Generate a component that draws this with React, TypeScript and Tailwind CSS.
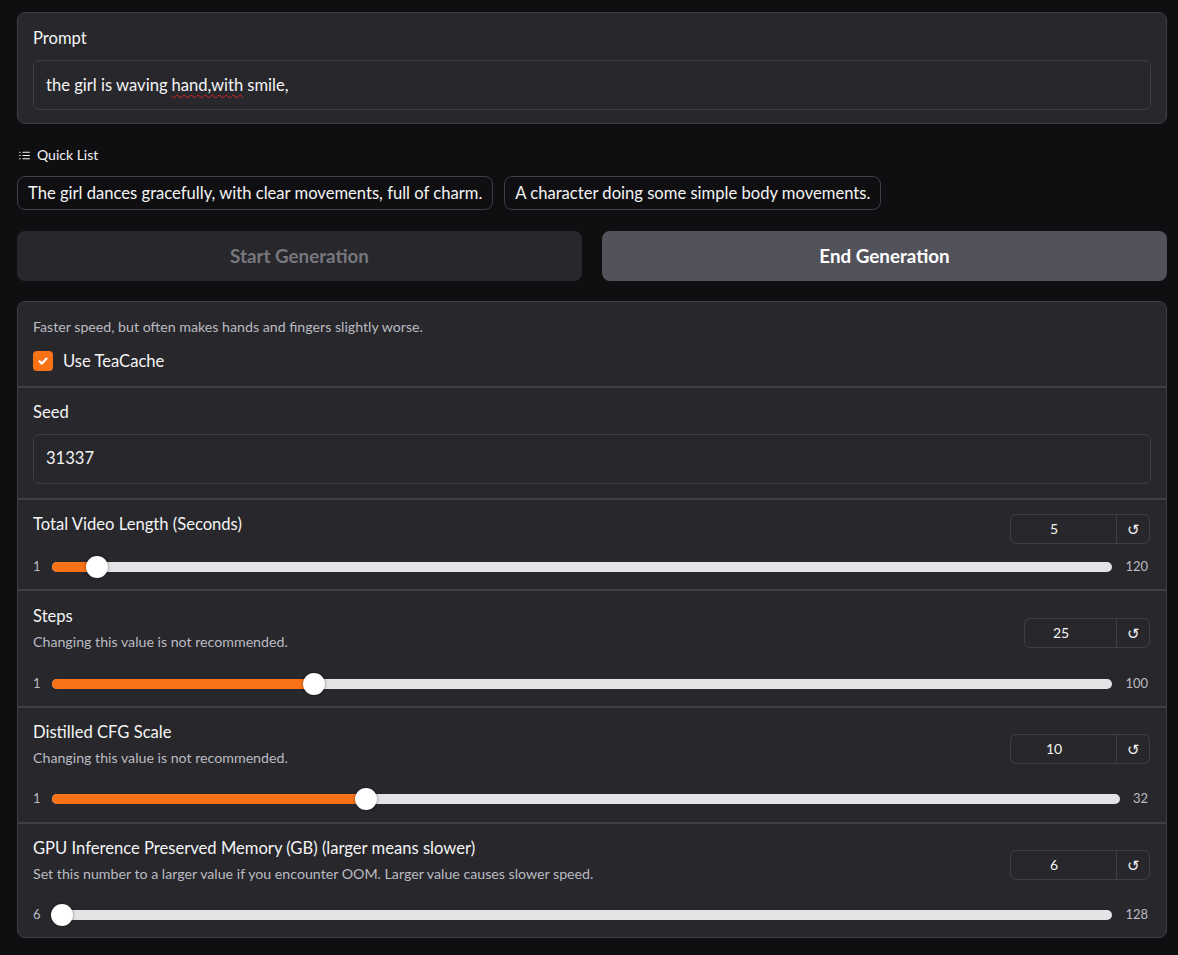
import React from "react";

const FONT = "font-['Lato','Noto_Sans',sans-serif]";

function ListIcon() {
  return (
    <svg width="13" height="13" viewBox="0 0 24 24" fill="none" stroke="currentColor" strokeWidth="2" strokeLinecap="round">
      <path d="M9 6h12M9 12h12M9 18h12" />
      <path d="M3 6h1M3 12h1M3 18h1" />
    </svg>
  );
}

type SliderProps = {
  label: string;
  info?: string;
  value: number;
  min: number;
  max: number;
  boxWidth: string;
  pad: string;
  infoGap?: string;
};

function SliderBlock({ label, info, value, min, max, boxWidth, pad, infoGap = "mb-[9px]" }: SliderProps) {
  const frac = (value - min) / (max - min);
  const pos = `calc(10px + ${frac} * (100% - 20px))`;
  return (
    <div className={`pl-[15px] pr-[16px] ${pad}`}>
      <div className="flex items-start justify-between">
        <div>
          <div className="text-[16.6px] leading-[20px] text-[#f4f4f5]">{label}</div>
          {info && (
            <div className={`mt-[6px] ${infoGap} text-[14.2px] leading-[20px] text-[#bbbbc2]`}>{info}</div>
          )}
        </div>
        <div
          className={`${boxWidth} ${info ? "mt-[12px]" : "mt-0"} flex h-[30px] rounded-[6px] border border-[#3f3f46]`}
        >
          <div className="flex flex-1 items-center justify-center pr-[19px] text-[14px] text-[#f4f4f5]">{value}</div>
          <div className="flex w-[33px] items-center justify-center border-l border-[#3f3f46] text-[15px] text-[#f4f4f5]">
            ↺
          </div>
        </div>
      </div>
      <div className="mt-[13px] flex h-[20px] items-center">
        <span className="w-[19px] text-[13px] text-[#bbbbc2]">{min}</span>
        <div className="relative h-[10px] flex-1 rounded-full bg-[#e4e4e7]">
          <div className="absolute left-0 top-0 h-full rounded-full bg-[#f97316]" style={{ width: pos }} />
          <div
            className="absolute top-1/2 h-[22px] w-[22px] -translate-x-1/2 -translate-y-1/2 rounded-full bg-white shadow-[0_0_3px_rgba(0,0,0,0.5)]"
            style={{ left: pos }}
          />
        </div>
        <span className="pl-[13px] pr-[2px] text-[13px] text-[#bbbbc2]">{max}</span>
      </div>
    </div>
  );
}

export default function App() {
  return (
    <div className={`min-h-screen bg-[#0f0f11] pl-[17px] pr-[11px] pt-[12px] pb-[16px] ${FONT}`}>
      {/* Prompt */}
      <div className="rounded-[8px] border border-[#3f3f46] bg-[#27272c] px-[15px] pt-[15px] pb-[13px]">
        <div className="text-[16.6px] leading-[20px] text-[#f4f4f5]">Prompt</div>
        <div className="mt-[12px] flex h-[50px] items-center rounded-[6px] border border-[#3f3f46] bg-[#27272c] px-[12px] text-[16.6px] text-[#f4f4f5]">
          the girl is waving{" "}
          <span className="ml-[4px] underline decoration-wavy decoration-[#e02424] decoration-1 underline-offset-[3px]">
            hand,with
          </span>
          <span className="ml-[4px]">smile,</span>
        </div>
      </div>

      {/* Quick list */}
      <div className="mt-[21px] flex items-center gap-[6px] pl-[1px] text-[14px] leading-[20px] text-[#f4f4f5]">
        <ListIcon />
        <span>Quick List</span>
      </div>
      <div className="mt-[11px] flex gap-[11px]">
        <div className="flex h-[34px] items-center rounded-[8px] border border-[#3f3f46] bg-[#0f0f11] px-[10px] text-[16.6px] text-[#f4f4f5]">
          The girl dances gracefully, with clear movements, full of charm.
        </div>
        <div className="flex h-[34px] items-center rounded-[8px] border border-[#3f3f46] bg-[#0f0f11] px-[10px] text-[16.6px] text-[#f4f4f5]">
          A character doing some simple body movements.
        </div>
      </div>

      {/* Actions */}
      <div className="mt-[21px] grid grid-cols-2 gap-[20px]">
        <div className="flex h-[50px] items-center justify-center rounded-[8px] bg-[#27272c] text-[18.8px] font-bold text-[#77777d]">
          Start Generation
        </div>
        <div className="flex h-[50px] items-center justify-center rounded-[8px] bg-[#52525b] text-[18.8px] font-bold text-white">
          End Generation
        </div>
      </div>

      {/* Settings */}
      <div className="mt-[20px] overflow-hidden rounded-[8px] border border-[#3f3f46] bg-[#27272c]">
        <div className="px-[15px] pt-[15px] pb-[12px]">
          <div className="text-[14.2px] leading-[20px] text-[#bbbbc2]">
            Faster speed, but often makes hands and fingers slightly worse.
          </div>
          <div className="mt-[12px] flex items-center gap-[10px]">
            <div className="flex h-[20px] w-[20px] items-center justify-center rounded-[4px] bg-[#f97316]">
              <svg width="12" height="12" viewBox="0 0 12 12" fill="none" stroke="white" strokeWidth="2.2" strokeLinecap="round" strokeLinejoin="round">
                <path d="M2.5 6.3l2.3 2.3L9.6 3.6" />
              </svg>
            </div>
            <span className="text-[16.6px] text-[#f4f4f5]">Use TeaCache</span>
          </div>
        </div>

        <div className="h-[2px] bg-[#3f3f46]" />

        <div className="px-[15px] pt-[14px] pb-[14px]">
          <div className="text-[16.6px] leading-[20px] text-[#f4f4f5]">Seed</div>
          <div className="mt-[12px] flex h-[50px] items-center rounded-[6px] border border-[#3f3f46] px-[12px] text-[16.6px] text-[#f4f4f5]">
            31337
          </div>
        </div>

        <div className="h-[2px] bg-[#3f3f46]" />
        <SliderBlock
          pad="pt-[14px] pb-[12px]"
          label="Total Video Length (Seconds)"
          value={5}
          min={1}
          max={120}
          boxWidth="w-[140px]"
        />
        <div className="h-[2px] bg-[#3f3f46]" />
        <SliderBlock
          pad="pt-[15px] pb-[12px]"
          label="Steps"
          info="Changing this value is not recommended."
          value={25}
          min={1}
          max={100}
          boxWidth="w-[126px]"
        />
        <div className="h-[2px] bg-[#3f3f46]" />
        <SliderBlock
          pad="pt-[14px] pb-[13px]"
          infoGap="mb-[8px]"
          label="Distilled CFG Scale"
          info="Changing this value is not recommended."
          value={10}
          min={1}
          max={32}
          boxWidth="w-[140px]"
        />
        <div className="h-[2px] bg-[#3f3f46]" />
        <SliderBlock
          pad="pt-[14px] pb-[12px]"
          infoGap="mb-[8px]"
          label="GPU Inference Preserved Memory (GB) (larger means slower)"
          info="Set this number to a larger value if you encounter OOM. Larger value causes slower speed."
          value={6}
          min={6}
          max={128}
          boxWidth="w-[140px]"
        />
      </div>
    </div>
  );
}
